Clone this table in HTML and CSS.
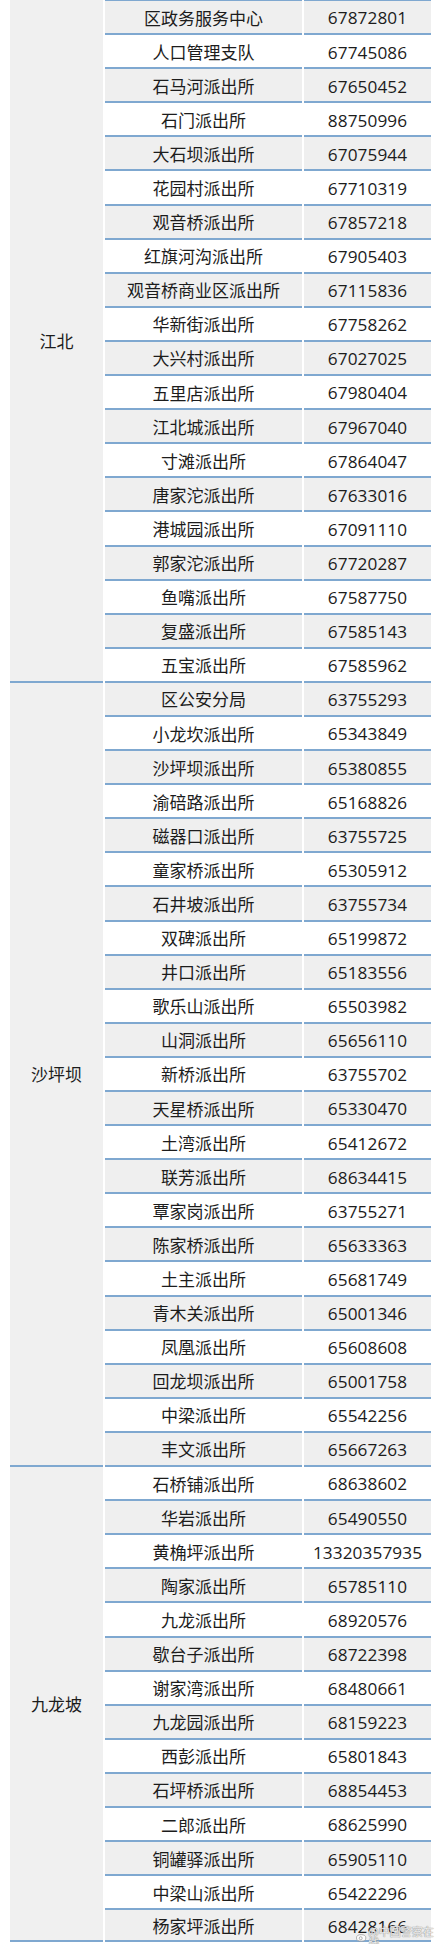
FILE: index.html
```html
<!DOCTYPE html>
<html lang="zh-CN">
<head>
<meta charset="utf-8">
<title>派出所电话</title>
<link rel="stylesheet" href="styles.css">
</head>
<body>
<div class="page">
<div class="grid">
<div class="d s20">江北</div>
<div class="n g">区政务服务中心</div><div class="p g">67872801</div>
<div class="n">人口管理支队</div><div class="p">67745086</div>
<div class="n g">石马河派出所</div><div class="p g">67650452</div>
<div class="n">石门派出所</div><div class="p">88750996</div>
<div class="n g">大石坝派出所</div><div class="p g">67075944</div>
<div class="n">花园村派出所</div><div class="p">67710319</div>
<div class="n g">观音桥派出所</div><div class="p g">67857218</div>
<div class="n">红旗河沟派出所</div><div class="p">67905403</div>
<div class="n g">观音桥商业区派出所</div><div class="p g">67115836</div>
<div class="n">华新街派出所</div><div class="p">67758262</div>
<div class="n g">大兴村派出所</div><div class="p g">67027025</div>
<div class="n">五里店派出所</div><div class="p">67980404</div>
<div class="n g">江北城派出所</div><div class="p g">67967040</div>
<div class="n">寸滩派出所</div><div class="p">67864047</div>
<div class="n g">唐家沱派出所</div><div class="p g">67633016</div>
<div class="n">港城园派出所</div><div class="p">67091110</div>
<div class="n g">郭家沱派出所</div><div class="p g">67720287</div>
<div class="n">鱼嘴派出所</div><div class="p">67587750</div>
<div class="n g">复盛派出所</div><div class="p g">67585143</div>
<div class="n">五宝派出所</div><div class="p">67585962</div>

<div class="d s23 top">沙坪坝</div>
<div class="n g">区公安分局</div><div class="p g">63755293</div>
<div class="n">小龙坎派出所</div><div class="p">65343849</div>
<div class="n g">沙坪坝派出所</div><div class="p g">65380855</div>
<div class="n">渝碚路派出所</div><div class="p">65168826</div>
<div class="n g">磁器口派出所</div><div class="p g">63755725</div>
<div class="n">童家桥派出所</div><div class="p">65305912</div>
<div class="n g">石井坡派出所</div><div class="p g">63755734</div>
<div class="n">双碑派出所</div><div class="p">65199872</div>
<div class="n g">井口派出所</div><div class="p g">65183556</div>
<div class="n">歌乐山派出所</div><div class="p">65503982</div>
<div class="n g">山洞派出所</div><div class="p g">65656110</div>
<div class="n">新桥派出所</div><div class="p">63755702</div>
<div class="n g">天星桥派出所</div><div class="p g">65330470</div>
<div class="n">土湾派出所</div><div class="p">65412672</div>
<div class="n g">联芳派出所</div><div class="p g">68634415</div>
<div class="n">覃家岗派出所</div><div class="p">63755271</div>
<div class="n g">陈家桥派出所</div><div class="p g">65633363</div>
<div class="n">土主派出所</div><div class="p">65681749</div>
<div class="n g">青木关派出所</div><div class="p g">65001346</div>
<div class="n">凤凰派出所</div><div class="p">65608608</div>
<div class="n g">回龙坝派出所</div><div class="p g">65001758</div>
<div class="n">中梁派出所</div><div class="p">65542256</div>
<div class="n g">丰文派出所</div><div class="p g">65667263</div>

<div class="d s14 top last">九龙坡</div>
<div class="n">石桥铺派出所</div><div class="p">68638602</div>
<div class="n g">华岩派出所</div><div class="p g">65490550</div>
<div class="n">黄桷坪派出所</div><div class="p">13320357935</div>
<div class="n g">陶家派出所</div><div class="p g">65785110</div>
<div class="n">九龙派出所</div><div class="p">68920576</div>
<div class="n g">歇台子派出所</div><div class="p g">68722398</div>
<div class="n">谢家湾派出所</div><div class="p">68480661</div>
<div class="n g">九龙园派出所</div><div class="p g">68159223</div>
<div class="n">西彭派出所</div><div class="p">65801843</div>
<div class="n g">石坪桥派出所</div><div class="p g">68854453</div>
<div class="n">二郎派出所</div><div class="p">68625990</div>
<div class="n g">铜罐驿派出所</div><div class="p g">65905110</div>
<div class="n">中梁山派出所</div><div class="p">65422296</div>
<div class="n g last">杨家坪派出所</div><div class="p g last">68428166</div>
</div>
<div class="wm"><svg class="wm-logo" width="12" height="10" viewBox="0 0 12 10"><ellipse cx="5.5" cy="6" rx="5" ry="3.5" fill="rgba(255,255,255,0.85)" stroke="#9a9a9a" stroke-width="0.8"/><circle cx="5" cy="6.3" r="1.6" fill="none" stroke="#9a9a9a" stroke-width="0.8"/></svg><span>@中国警察在线</span></div>
</div>
</body>
</html>
```

FILE: styles.css
```css
html, body {
  margin: 0;
  padding: 0;
  background: #ffffff;
}

.page {
  position: relative;
  width: 440px;
  height: 1944px;
  overflow: hidden;
  font-family: "Open Sans", "Noto Sans CJK SC", sans-serif;
  color: #1c1c1c;
}

.grid {
  display: grid;
  grid-template-columns: 93px 197px 127px;
  grid-auto-rows: 34.1px;
  column-gap: 2px;
  margin: -1px 0 0 10px;
}

.grid > div {
  display: flex;
  align-items: center;
  justify-content: center;
  box-sizing: border-box;
  padding-top: 2px;
  font-size: 17px;
  line-height: 1;
  white-space: nowrap;
  background: #ffffff;
  border-top: 2px solid #7fa8d0;
}

.grid > .g {
  background: #efefef;
}

.grid > .last {
  border-bottom: 2px solid #7fa8d0;
}

.d {
  grid-column: 1;
  background: #f0f0f0 !important;
  border-top-color: transparent !important;
}

.d.top {
  border-top-color: #7fa8d0 !important;
}

.n {
  grid-column: 2;
}

.p {
  grid-column: 3;
  font-size: 17.2px !important;
  letter-spacing: 0.1px;
}

.s20 { grid-row: span 20; }
.s23 { grid-row: span 23; }
.s14 { grid-row: span 14; }

.wm {
  position: absolute;
  left: 356px;
  top: 1926px;
  display: flex;
  align-items: center;
  gap: 1px;
  font-family: "Noto Sans CJK SC", sans-serif;
  font-size: 11px;
  line-height: 1;
  color: rgba(255, 255, 255, 0.85);
  text-shadow: 0 0 1px #8a8a8a, 0 0 1px #8a8a8a;
}

.wm-logo {
  display: block;
}
```
